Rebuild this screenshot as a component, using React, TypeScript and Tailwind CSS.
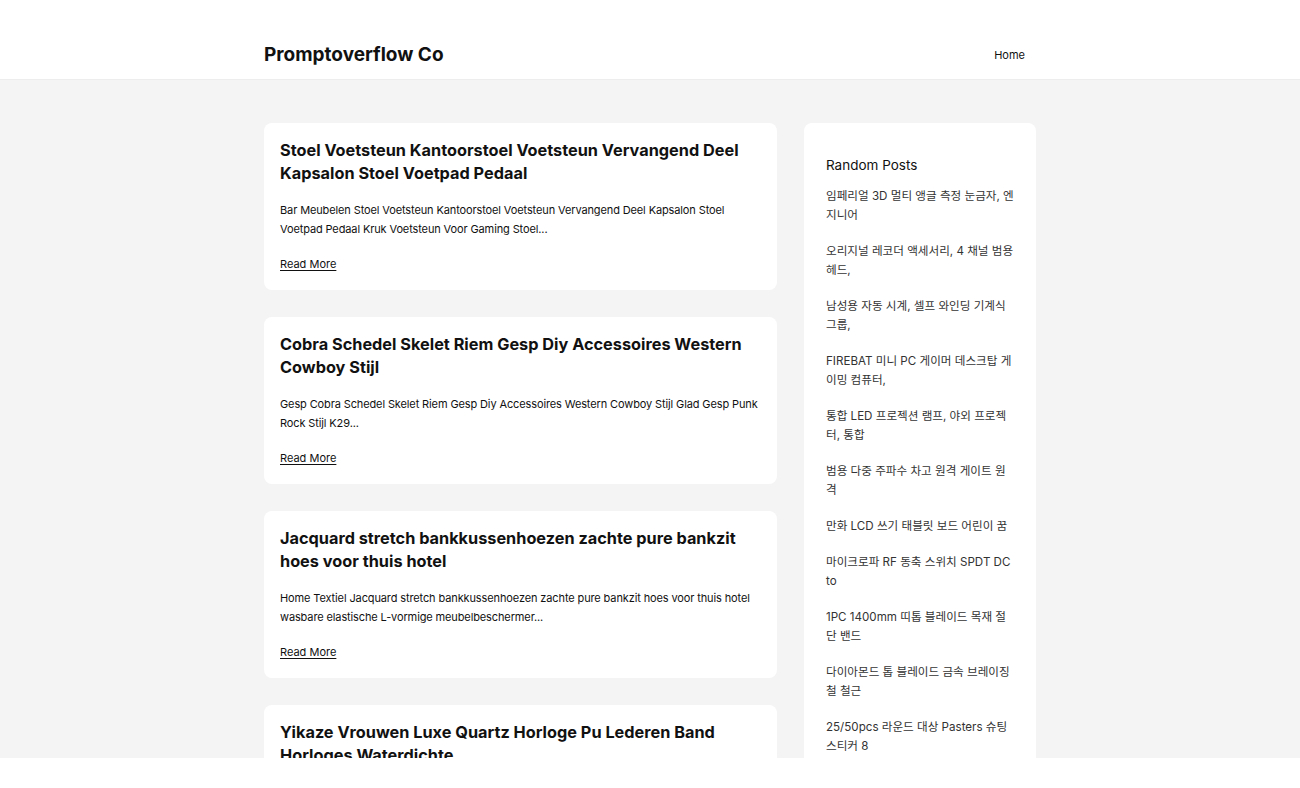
import React from "react";

const posts = [
  {
    title: "Stoel Voetsteun Kantoorstoel Voetsteun Vervangend Deel Kapsalon Stoel Voetpad Pedaal",
    excerpt:
      "Bar Meubelen Stoel Voetsteun Kantoorstoel Voetsteun Vervangend Deel Kapsalon Stoel Voetpad Pedaal Kruk Voetsteun Voor Gaming Stoel...",
  },
  {
    title: "Cobra Schedel Skelet Riem Gesp Diy Accessoires Western Cowboy Stijl",
    excerpt:
      "Gesp Cobra Schedel Skelet Riem Gesp Diy Accessoires Western Cowboy Stijl Glad Gesp Punk Rock Stijl K29...",
  },
  {
    title: "Jacquard stretch bankkussenhoezen zachte pure bankzit hoes voor thuis hotel",
    excerpt:
      "Home Textiel Jacquard stretch bankkussenhoezen zachte pure bankzit hoes voor thuis hotel wasbare elastische L-vormige meubelbeschermer...",
  },
  {
    title: "Yikaze Vrouwen Luxe Quartz Horloge Pu Lederen Band Horloges Waterdichte",
    excerpt: "Yikaze Vrouwen Luxe Quartz Horloge Pu Lederen Band Horloges Waterdichte...",
  },
];

const randomPosts = [
  "임페리얼 3D 멀티 앵글 측정 눈금자, 엔지니어",
  "오리지널 레코더 액세서리, 4 채널 범용 헤드,",
  "남성용 자동 시계, 셀프 와인딩 기계식 그룹,",
  "FIREBAT 미니 PC 게이머 데스크탑 게이밍 컴퓨터,",
  "통합 LED 프로젝션 램프, 야외 프로젝터, 통합",
  "범용 다중 주파수 차고 원격 게이트 원격",
  "만화 LCD 쓰기 태블릿 보드 어린이 꿈",
  "마이크로파 RF 동축 스위치 SPDT DC to",
  "1PC 1400mm 띠톱 블레이드 목재 절단 밴드",
  "다이아몬드 톱 블레이드 금속 브레이징 철 철근",
  "25/50pcs 라운드 대상 Pasters 슈팅 스티커 8",
  "스테인레스 스틸 주방 수납 선반 랙",
];

const PostCard = ({ title, excerpt }: { title: string; excerpt: string }) => (
  <article className="bg-white rounded-lg p-4 flex flex-col gap-4">
    <h2 className="text-[16.3px] leading-[23px] font-bold text-[#111]">{title}</h2>
    <p className="text-[11px] leading-[19px] tracking-[-0.12px] text-[#111]">{excerpt}</p>
    <a href="#" className="text-[11px] leading-[19px] text-[#111] underline underline-offset-2 self-start">
      Read More
    </a>
  </article>
);

export default function App() {
  return (
    <div
      className="h-screen flex flex-col bg-white overflow-hidden"
      style={{ fontFamily: "Inter, 'Noto Sans CJK KR', sans-serif" }}
    >
      <header className="h-20 shrink-0 bg-white border-b border-[#ededed]">
        <div className="w-[772px] mx-auto h-full flex items-center justify-between pt-8">
          <h1 className="text-[19px] font-bold text-[#111]">Promptoverflow Co</h1>
          <nav className="pr-[11px] mb-[6px]">
            <a href="#" className="text-[11px] text-[#111]">
              Home
            </a>
          </nav>
        </div>
      </header>
      <main className="flex-1 bg-[#f4f4f4] overflow-hidden">
        <div className="w-[772px] mx-auto pt-[43px] flex gap-[27px] items-start">
          <div className="w-[513px] flex flex-col gap-[27px]">
            {posts.map((p) => (
              <PostCard key={p.title} title={p.title} excerpt={p.excerpt} />
            ))}
          </div>
          <aside className="w-[232px] bg-white rounded-lg px-[22px] pt-[32px] pb-6">
            <h3 className="text-[13.5px] leading-5 text-[#111] mb-3">Random Posts</h3>
            <ul className="flex flex-col gap-[17px]">
              {randomPosts.map((r) => (
                <li key={r} className="text-[11.6px] leading-[19px]">
                  <a href="#" className="text-[#333]">
                    {r}
                  </a>
                </li>
              ))}
            </ul>
          </aside>
        </div>
      </main>
      <footer className="h-[30px] shrink-0 bg-white" />
    </div>
  );
}
